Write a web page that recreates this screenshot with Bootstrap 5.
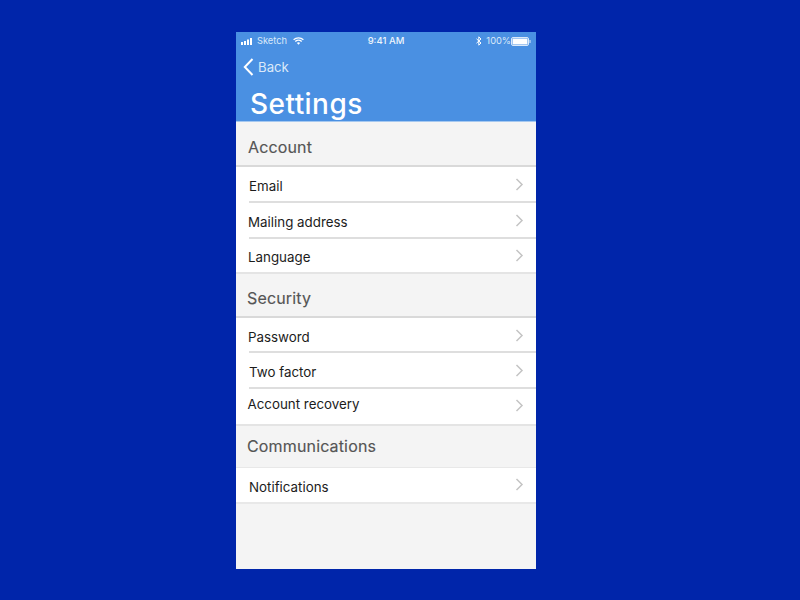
<!DOCTYPE html>
<html lang="en">
<head>
<meta charset="utf-8">
<title>Settings</title>
<link rel="stylesheet" href="https://cdn.jsdelivr.net/npm/bootstrap@5.3.0/dist/css/bootstrap.min.css">
<style>
html,body{height:100%}
body{background:#0025aa;font-family:Inter,"Liberation Sans",sans-serif;padding-top:32px}
.phone{width:300px;height:537px;background:#f4f4f4;margin-left:236px}
.topbar{background:#4a90e2;height:90px;color:#fff;border-bottom:1px solid #a5c8f0}
.statusline{height:18px;padding:0 5px;font-size:9.3px;color:#dbe9f9;line-height:18px}
.statusline .clock{font-weight:500;color:#eef5fc;font-size:9.5px}
.wifi{margin-left:3px}
.backline{height:34px;padding-left:7px;font-size:13.2px;color:#dbe9f9;gap:4px}
.backline span{padding-top:1px}
.screen-title{font-size:28px;font-weight:500;line-height:32px;margin:0 0 0 14px;color:#fff;letter-spacing:.45px;padding-top:4px;height:36px}
.sect{font-size:16px;font-weight:400;color:#555;padding-left:11px;letter-spacing:.15px;-webkit-text-stroke:.15px #555}
.sect-a{height:43px;padding-top:7px;padding-left:12px}
.sect-b{height:42px;padding-top:5px}
.sect-c{height:41px;padding-bottom:1px}
.rows{background:#fff;border-top:2px solid #d9d9d9;border-bottom:2px solid #e4e4e4}
.rows-last{border-top:1px solid #e8e8e8;border-bottom:2px solid #e8e8e8}
.rowitem{height:36px;padding:0 12px;font-size:13.35px;color:#1c1c1c;position:relative}
.rowitem span{padding-top:3px}
.rowitem svg{margin-top:-1px}
.rowitem.sep::after{content:"";position:absolute;left:13px;right:0;bottom:0;height:2px;background:#dedede}
.h33{height:33px}
.h34{height:34px}
.h34 span{padding-top:5px}
.h35{height:35px}
.inset{padding-left:13px}
.up{padding-left:11.500px}
.up span{padding-top:0;margin-top:-5px}
.up svg{margin-top:-3px}
</style>
</head>
<body>
<div class="phone d-flex flex-column">
  <div class="topbar">
    <div class="statusline d-flex justify-content-between align-items-center">
      <div class="d-flex align-items-center" style="width:80px;gap:3px">
        <svg width="13" height="7" viewBox="0 0 13 7"><rect x="0" y="4" width="2" height="3" fill="#fff"/><rect x="3" y="3" width="2" height="4" fill="#fff"/><rect x="6" y="1.500" width="2" height="5.500" fill="#fff"/><rect x="9" y="0" width="2" height="7" fill="#fff"/></svg>
        <span>Sketch</span>
        <svg class="wifi" width="11" height="8" viewBox="0 0 11 8" fill="none" stroke="#fff" stroke-width="1.300"><path d="M.6 2.800a7 7 0 0 1 9.800 0M2.300 4.500a4.600 4.600 0 0 1 6.400 0"/><path d="M5.500 7.800 3.900 6.100a2.300 2.300 0 0 1 3.200 0z" fill="#fff" stroke="none"/></svg>
      </div>
      <span class="clock">9:41 AM</span>
      <div class="d-flex align-items-center justify-content-end" style="width:80px;gap:4px">
        <svg width="6" height="10" viewBox="0 0 6 10" fill="none" stroke="#fff" stroke-width="1"><path d="M.5 2.800 5 7 2.800 9.200V.8L5 3 .5 7.200"/></svg>
        <span>100%</span>
        <svg width="20" height="9" viewBox="0 0 20 9" style="margin-left:-4px"><rect x=".5" y=".5" width="17" height="8" rx="1.500" fill="none" stroke="#dbe9f9"/><rect x="1.500" y="1.500" width="15" height="6" fill="#fff"/><rect x="18.500" y="3" width="1" height="3" fill="#dbe9f9"/></svg>
      </div>
    </div>
    <div class="backline d-flex align-items-center">
      <svg width="11" height="18" viewBox="0 0 11 18" fill="none" stroke="#fff" stroke-width="2"><path d="M9.500 1 1.800 9l7.700 8"/></svg>
      <span>Back</span>
    </div>
    <h1 class="screen-title">Settings</h1>
  </div>

  <div class="sect sect-a d-flex align-items-center">Account</div>
  <div class="rows">
    <div class="rowitem inset sep d-flex justify-content-between align-items-center"><span>Email</span><svg width="9" height="13" viewBox="0 0 9 13" fill="none" stroke="#c4c4c4" stroke-width="1.500"><path d="m1.500 1 5.500 5.500-5.500 5.500"/></svg></div>
    <div class="rowitem sep d-flex justify-content-between align-items-center"><span>Mailing address</span><svg width="9" height="13" viewBox="0 0 9 13" fill="none" stroke="#c4c4c4" stroke-width="1.500"><path d="m1.500 1 5.500 5.500-5.500 5.500"/></svg></div>
    <div class="rowitem h33 d-flex justify-content-between align-items-center"><span>Language</span><svg width="9" height="13" viewBox="0 0 9 13" fill="none" stroke="#c4c4c4" stroke-width="1.500"><path d="m1.500 1 5.500 5.500-5.500 5.500"/></svg></div>
  </div>

  <div class="sect sect-b d-flex align-items-center">Security</div>
  <div class="rows">
    <div class="rowitem h35 sep d-flex justify-content-between align-items-center"><span>Password</span><svg width="9" height="13" viewBox="0 0 9 13" fill="none" stroke="#c4c4c4" stroke-width="1.500"><path d="m1.500 1 5.500 5.500-5.500 5.500"/></svg></div>
    <div class="rowitem inset sep d-flex justify-content-between align-items-center"><span>Two factor</span><svg width="9" height="13" viewBox="0 0 9 13" fill="none" stroke="#c4c4c4" stroke-width="1.500"><path d="m1.500 1 5.500 5.500-5.500 5.500"/></svg></div>
    <div class="rowitem h35 up d-flex justify-content-between align-items-center"><span>Account recovery</span><svg width="9" height="13" viewBox="0 0 9 13" fill="none" stroke="#c4c4c4" stroke-width="1.500"><path d="m1.500 1 5.500 5.500-5.500 5.500"/></svg></div>
  </div>

  <div class="sect sect-c d-flex align-items-center">Communications</div>
  <div class="rows rows-last">
    <div class="rowitem inset h34 d-flex justify-content-between align-items-center"><span>Notifications</span><svg width="9" height="13" viewBox="0 0 9 13" fill="none" stroke="#c4c4c4" stroke-width="1.500"><path d="m1.500 1 5.500 5.500-5.500 5.500"/></svg></div>
  </div>
</div>
<script src="https://cdn.jsdelivr.net/npm/bootstrap@5.3.0/dist/js/bootstrap.bundle.min.js"></script>
</body>
</html>
